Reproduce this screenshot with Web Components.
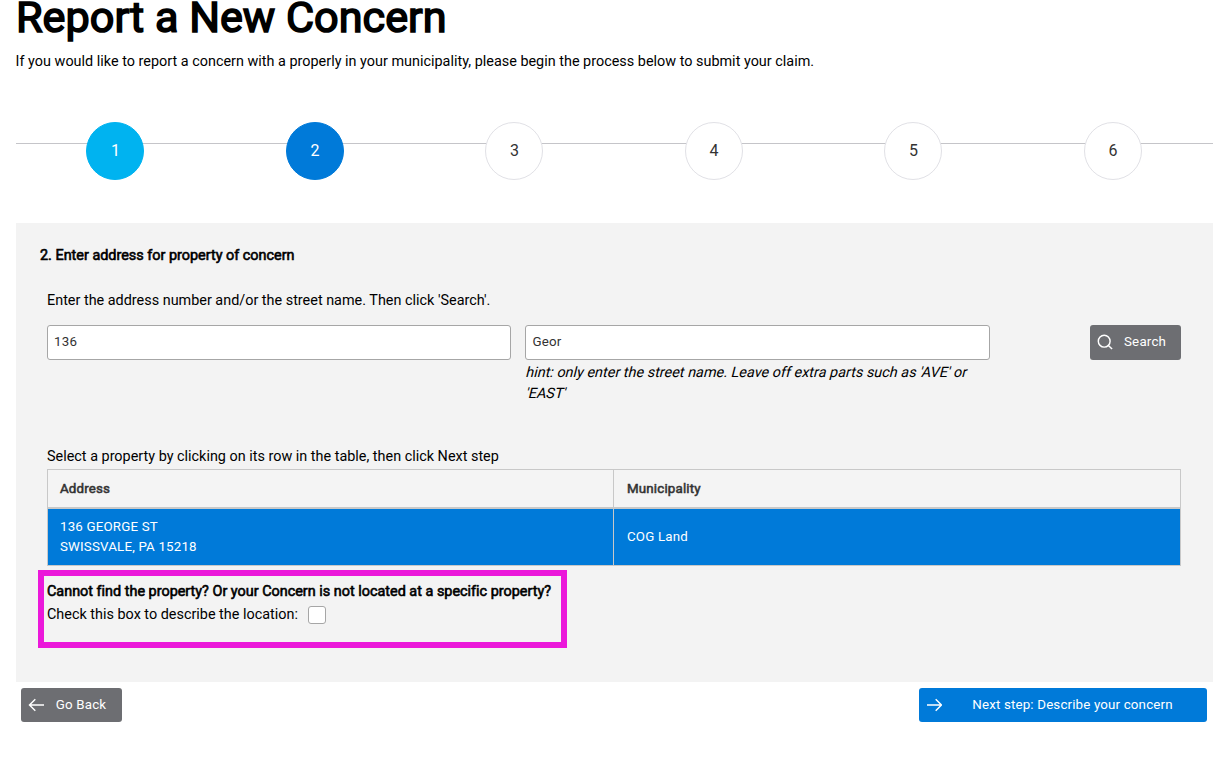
<!DOCTYPE html>
<html lang="en">
<head>
<meta charset="utf-8">
<title>Report a New Concern</title>
<style>
body{margin:0;background:#fff;color:#000;font-family:Roboto,"Liberation Sans",sans-serif;font-size:14.4px;letter-spacing:.004px}
</style>
</head>
<body>
<concern-page></concern-page>
<script>
const define = (name, markup) => customElements.define(name, class extends HTMLElement {
  constructor() {
    super();
    this.attachShadow({mode: 'open'}).innerHTML = markup;
  }
});

define('page-heading', `<style>
:host{display:flow-root;height:122px}
h1{margin:0;font-size:43.2px;line-height:36px;height:36px;font-weight:400;letter-spacing:0;-webkit-text-stroke:1.6px #000;white-space:nowrap}
p{margin:15px 0 0 -.4px;line-height:21px;white-space:nowrap;letter-spacing:.009px}
</style><h1><slot name="title"></slot></h1><p><slot></slot></p>`);

define('step-track', `<style>
:host{display:grid;grid-template-columns:repeat(6,1fr);height:101px;
background:linear-gradient(#c5c5c9,#c5c5c9) 0 21px/100% 1px no-repeat}
</style><slot></slot>`);

define('step-dot', `<style>
:host{display:flex;justify-content:center;align-items:flex-start;padding-right:.6px}
span{box-sizing:border-box;width:58px;height:58px;border-radius:50%;border:1px solid #e1e1e6;background:#fff;color:#333;font-size:16px;letter-spacing:.3px;line-height:56px;text-align:center;padding-left:.4px}
:host([state=done]) span{background:#00b3f0;border-color:#00b3f0;color:#fff}
:host([state=current]) span{background:#007ad9;border-color:#007ad9;color:#fff}
</style><span><slot></slot></span>`);

define('text-field', `<style>
:host{display:block;box-sizing:border-box;height:35px;border:1px solid #a6a6a6;border-radius:3px;background:#fff;color:#333;font-size:13.33px;letter-spacing:.2px;line-height:32px;padding-left:var(--inset,6px)}
</style><slot></slot>`);

define('icon-button', `<style>
:host{display:flex;box-sizing:border-box;align-items:center;border-radius:3px;background:#6d6e72;color:#fff;font-size:13.33px;letter-spacing:.2px;padding:0 15px 0 7px;height:34px}
:host([primary]){background:#007ad9;letter-spacing:.16px}
::slotted(svg){width:16px;height:16px;flex:none;fill:none;stroke:#fff;stroke-width:1.45}
span{flex:1;text-align:center;white-space:nowrap;line-height:20px;margin-left:11px}
</style><slot name="icon"></slot><span><slot></slot></span>`);

define('property-table', `<style>
:host{display:grid;grid-template-columns:565px 1fr;grid-template-rows:37px 56px;border:1px solid #c8c8c8;box-sizing:border-box;height:97px;row-gap:2px;column-gap:1px;background:#c8c8c8;font-size:13.33px;letter-spacing:.17px;line-height:20px}
div{display:flex;align-items:center;padding-left:12px;background:#f4f4f4;color:#333}
div:nth-of-type(even){padding-left:13px}
.h{-webkit-text-stroke:.55px #333}
.r{background:#007ad9;color:#fff}
</style><div class="h">Address</div><div class="h">Municipality</div>
<div class="r">136 GEORGE ST<br>SWISSVALE, PA 15218</div><div class="r">COG Land</div>`);

define('check-callout', `<style>
:host{display:block;box-sizing:border-box;width:529px;height:78px;border:6px solid #eb18da;padding:5px 3px 3px;white-space:nowrap}
b{display:block;font-weight:400;-webkit-text-stroke:.6px #000;line-height:22px}
label{display:flex;line-height:24px;height:26px}
i{box-sizing:border-box;width:18px;height:18px;margin:3px 0 0 10px;background:#fff;border:1px solid #a6a6a6;border-radius:3px}
</style><b>Cannot find the property? Or your Concern is not located at a specific property?</b>
<label>Check this box to describe the location:<i></i></label>`);

define('address-panel', `<style>
:host{display:block;box-sizing:border-box;height:459px;background:#f3f3f3;padding:22px 32px 0 31px;line-height:21px}
h2{margin:0 0 0 -7px;font-size:14.4px;font-weight:400;-webkit-text-stroke:.6px #000}
p{margin:24px 0 14px}
.search{display:grid;grid-template-columns:464px 465px 91px;column-gap:14px;height:121px;align-items:start}
.search icon-button{margin-left:86px;width:91px;height:35px;padding-bottom:1px}
.street{--inset:6.4px}
em{display:block;padding:2px 0 0;white-space:nowrap;font-style:normal}
em span{display:block;transform:skewX(-14deg);transform-origin:0 16px}
.pick{margin:0 0 2px}
check-callout{margin:4px 0 0 -9px}
</style>
<h2>2. Enter address for property of concern</h2>
<p>Enter the address number and/or the street name. Then click 'Search'.</p>
<div class="search"><text-field>136</text-field>
<div class="street"><text-field>Geor</text-field><em><span>hint: only enter the street name. Leave off extra parts such as 'AVE' or</span><span>'EAST'</span></em></div>
<icon-button><svg slot="icon" viewBox="0 0 16 16"><circle cx="7.2" cy="7.2" r="5.9"/><path d="M11.4 11.4l3.7 3.7"/></svg>Search</icon-button></div>
<p class="pick">Select a property by clicking on its row in the table, then click Next step</p>
<property-table></property-table>
<check-callout></check-callout>`);

define('concern-page', `<style>
:host{display:block;height:770px;padding:0 19px 0 16px;box-sizing:border-box}
nav{display:flex;justify-content:space-between;padding:6px 6px 0 5px}
.back{width:101px}.next{width:288px}
</style>
<page-heading><span slot="title">Report a New Concern</span>If you would like to report a concern with a properly in your municipality, please begin the process below to submit your claim.</page-heading>
<step-track><step-dot state="done">1</step-dot><step-dot state="current">2</step-dot><step-dot>3</step-dot><step-dot>4</step-dot><step-dot>5</step-dot><step-dot>6</step-dot></step-track>
<address-panel></address-panel>
<nav><icon-button class="back"><svg slot="icon" viewBox="0 0 16 16"><path d="M16 8H1.8M7.3 2.2L1.5 8l5.8 5.8"/></svg>Go Back</icon-button>
<icon-button class="next" primary><svg slot="icon" viewBox="0 0 16 16"><path d="M1 8h14.2M9.7 2.2L15.5 8l-5.8 5.8"/></svg>Next step: Describe your concern</icon-button></nav>`);
</script>
</body>
</html>
